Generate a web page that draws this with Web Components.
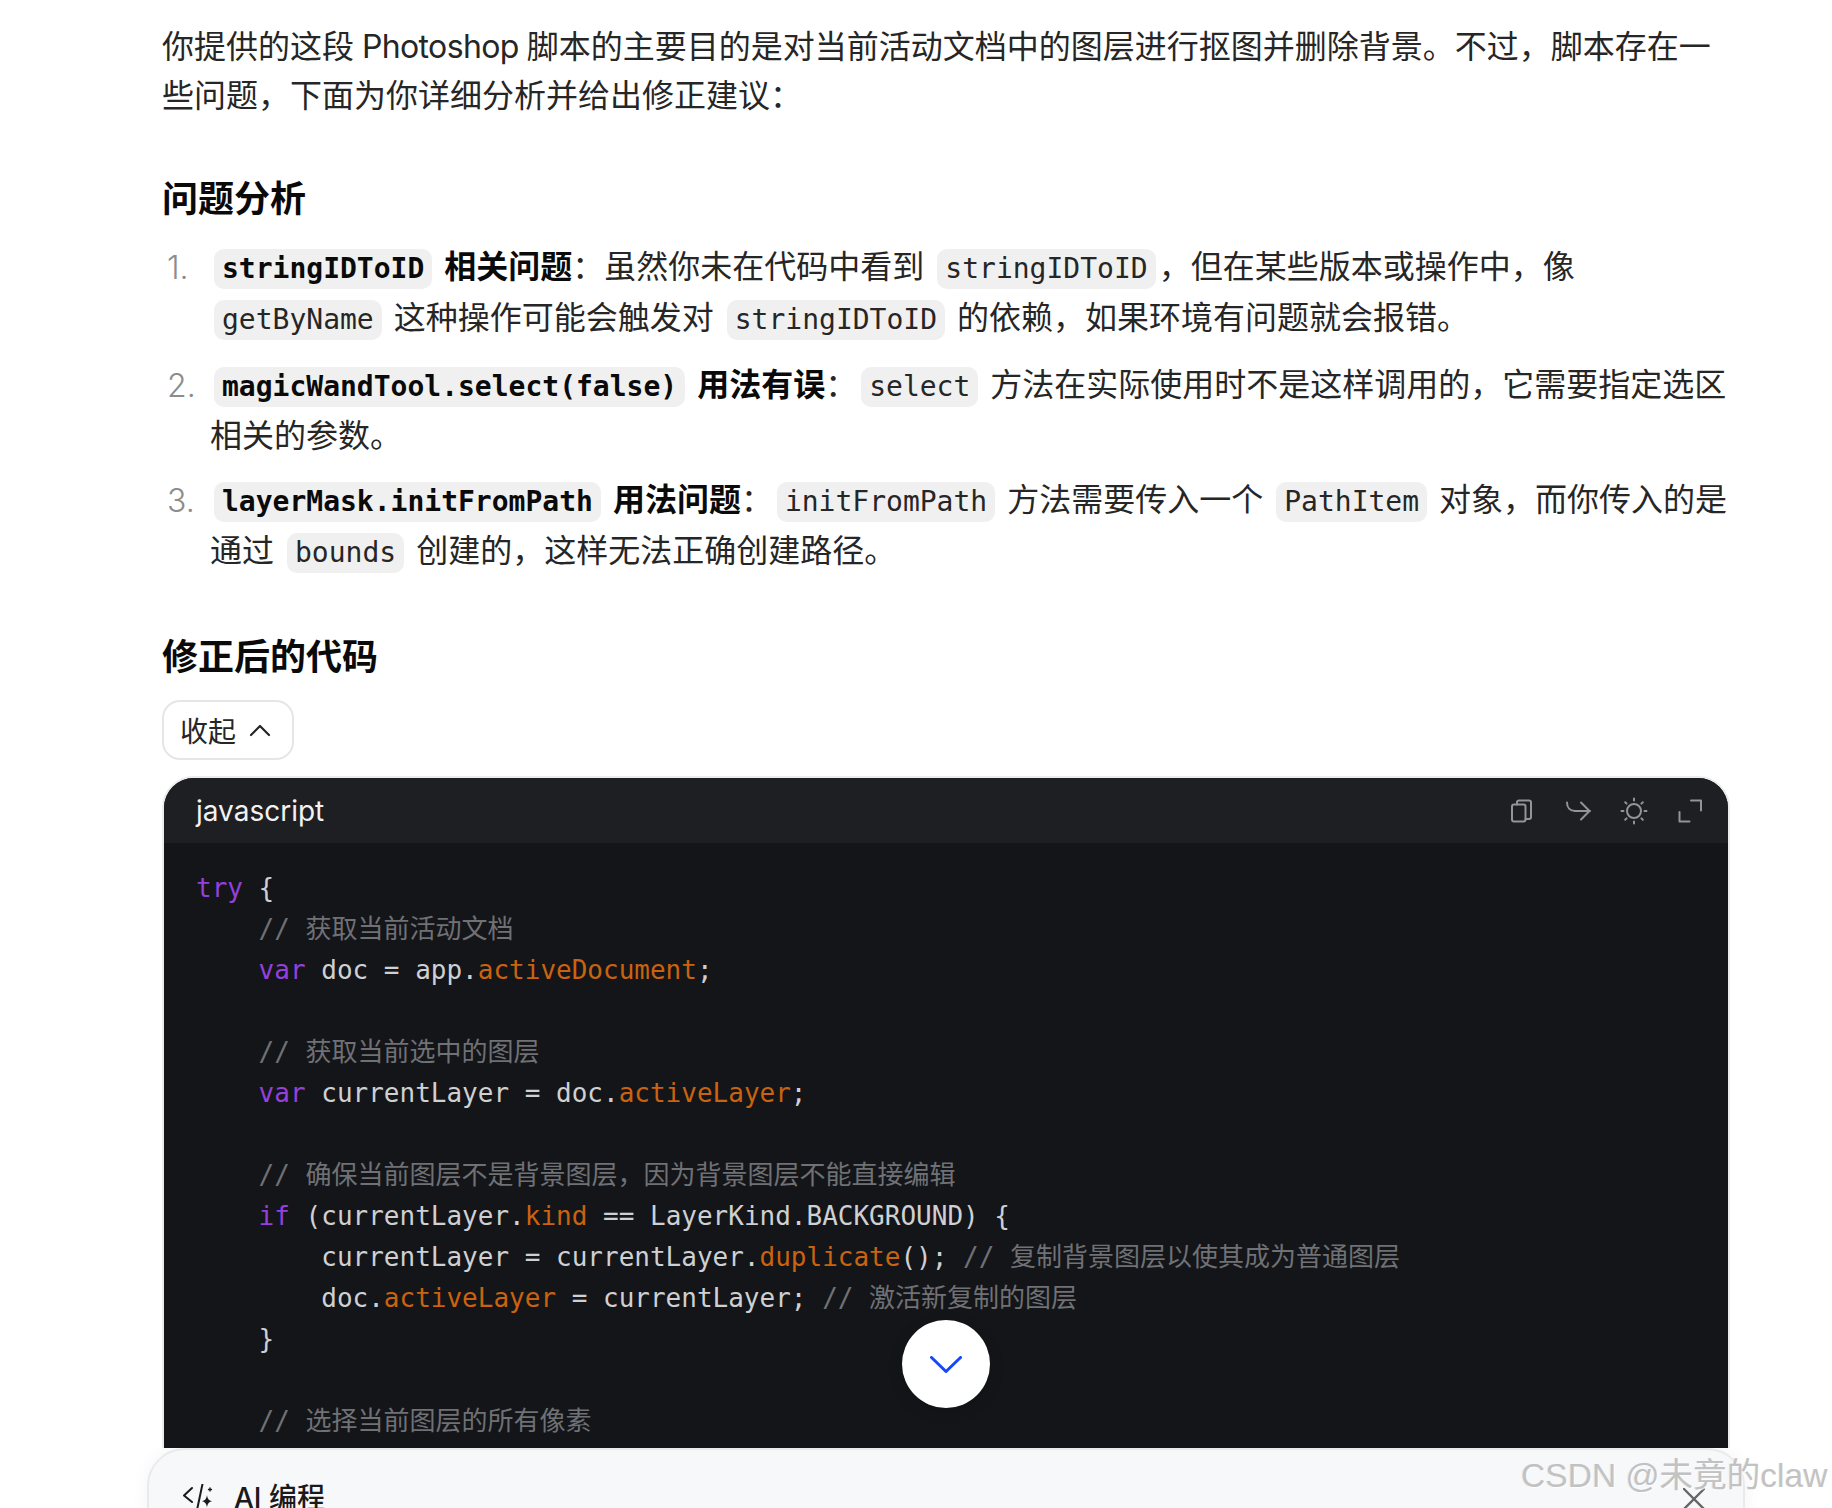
<!DOCTYPE html>
<html lang="zh">
<head>
<meta charset="utf-8">
<title>AI 编程</title>
<style>
  html, body { margin: 0; background: #fff; }
</style>
</head>
<body>
<answer-page>
  <md-para>你提供的这段 <span>Photoshop</span> 脚本的主要目的是对当前活动文档中的图层进行抠图并删除背景。不过，脚本存在一些问题，下面为你详细分析并给出修正建议：</md-para>
  <md-heading style="--top:55px">问题分析</md-heading>
  <md-list>
    <md-item n="1."><inline-code strong>stringIDToID</inline-code> <b>相关问题</b>：虽然你未在代码中看到 <inline-code>stringIDToID</inline-code>，但在某些版本或操作中，像 <inline-code>getByName</inline-code> 这种操作可能会触发对 <inline-code>stringIDToID</inline-code> 的依赖，如果环境有问题就会报错。</md-item>
    <md-item n="2." style="--mt:2px"><inline-code strong>magicWandTool.select(false)</inline-code> <b>用法有误</b>：<inline-code>select</inline-code> 方法在实际使用时不是这样调用的，它需要指定选区相关的参数。</md-item>
    <md-item n="3." style="--mt:1px"><inline-code strong>layerMask.initFromPath</inline-code> <b>用法问题</b>：<inline-code>initFromPath</inline-code> 方法需要传入一个 <inline-code>PathItem</inline-code> 对象，而你传入的是通过 <inline-code>bounds</inline-code> 创建的，这样无法正确创建路径。</md-item>
  </md-list>
  <md-heading style="--top:56px">修正后的代码</md-heading>
  <collapse-button>收起</collapse-button>
  <code-block lang="javascript"></code-block>
  <scroll-down slot="over"></scroll-down>
  <ai-panel slot="bottom">AI 编程</ai-panel>
  <water-mark slot="over">CSDN @未竟的claw</water-mark>
</answer-page>

<script>
const CJK = '"Noto Sans CJK SC", sans-serif';
const SANS = `Inter, ${CJK}`;
const MONO = `"DejaVu Sans Mono", ${CJK}`;

class AnswerPage extends HTMLElement {
  constructor() {
    super();
    this.attachShadow({ mode: 'open' }).innerHTML = `
      <style>
        :host { display: flex; flex-direction: column; position: relative; height: 1508px; overflow: hidden;
          font-family: ${SANS}; color: #262626; background: #fff; }
        .scroll { height: 1448px; overflow: hidden; padding: 22px 103px 0 162px; box-sizing: border-box; flex: none; }
      </style>
      <div class="scroll"><slot></slot></div>
      <slot name="bottom"></slot>
      <slot name="over"></slot>
    `;
  }
}

class MdPara extends HTMLElement {
  constructor() {
    super();
    this.attachShadow({ mode: 'open' }).innerHTML = `
      <style>
        :host { display: block; font-size: 32px; line-height: 49px; word-spacing: -1px; }
        ::slotted(span) { letter-spacing: -.65px; }
      </style>
      <slot></slot>
    `;
  }
}

class MdHeading extends HTMLElement {
  constructor() {
    super();
    this.attachShadow({ mode: 'open' }).innerHTML = `
      <style>:host { display: block; margin-top: var(--top, 55px); font-size: 36px; line-height: 48px; font-weight: 700; color: #0a0a0a; }</style>
      <slot></slot>
    `;
  }
}

class MdList extends HTMLElement {
  constructor() {
    super();
    this.attachShadow({ mode: 'open' }).innerHTML = `
      <style>:host { display: flex; flex-direction: column; gap: 14px; margin-top: 19px; }</style>
      <slot></slot>
    `;
  }
}

class MdItem extends HTMLElement {
  constructor() {
    super();
    this.attachShadow({ mode: 'open' }).innerHTML = `
      <style>
        :host { display: grid; grid-template-columns: 48px 1fr; margin-top: var(--mt, 0); font-size: 32px; line-height: 49px; }
        .n { color: #8c8c8c; padding-left: 5px; line-height: 52px; font-size: 32px; font-weight: 300; }
        ::slotted(b) { font-weight: 700; color: #0a0a0a; }
      </style>
      <div class="n">${this.getAttribute('n')}</div>
      <div><slot></slot></div>
    `;
  }
}

class InlineCode extends HTMLElement {
  constructor() {
    super();
    this.attachShadow({ mode: 'open' }).innerHTML = `
      <style>
        :host { display: inline-block; font-family: ${MONO}; font-size: 28px; line-height: 40px; padding: 0 8px;
          margin: 4px 3px 4px 4px; background: #f0f0f0; border-radius: 10px; color: #262626; }
        :host([strong]) { font-weight: 700; color: #0a0a0a; }
      </style>
      <slot></slot>
    `;
  }
}

class CollapseButton extends HTMLElement {
  constructor() {
    super();
    this.attachShadow({ mode: 'open' }).innerHTML = `
      <style>
        :host { display: flex; width: 132px; height: 60px; box-sizing: border-box; margin-top: 19px; align-items: center;
          gap: 12px; padding-left: 16px; border: 2px solid #e6e6e6; border-radius: 18px; font-size: 28px; color: #262626; }
        svg { width: 24px; height: 24px; }
      </style>
      <slot></slot>
      <svg viewBox="0 0 24 24" fill="none" stroke="#262626" stroke-width="2.2" stroke-linecap="round" stroke-linejoin="round"><path d="M3 17 12 8l9 9"/></svg>
    `;
  }
}

// t = plain, k = keyword, p = property, c = comment
const CODE = [
  [['k', 'try'], ['t', ' {']],
  [['c', '    // 获取当前活动文档']],
  [['k', '    var'], ['t', ' doc = app.'], ['p', 'activeDocument'], ['t', ';']],
  [],
  [['c', '    // 获取当前选中的图层']],
  [['k', '    var'], ['t', ' currentLayer = doc.'], ['p', 'activeLayer'], ['t', ';']],
  [],
  [['c', '    // 确保当前图层不是背景图层，因为背景图层不能直接编辑']],
  [['k', '    if'], ['t', ' (currentLayer.'], ['p', 'kind'], ['t', ' == LayerKind.BACKGROUND) {']],
  [['t', '        currentLayer = currentLayer.'], ['p', 'duplicate'], ['t', '(); '], ['c', '// 复制背景图层以使其成为普通图层']],
  [['t', '        doc.'], ['p', 'activeLayer'], ['t', ' = currentLayer; '], ['c', '// 激活新复制的图层']],
  [['t', '    }']],
  [],
  [['c', '    // 选择当前图层的所有像素']],
];

class CodeBlock extends HTMLElement {
  constructor() {
    super();
    const lines = CODE.map(line => `<div class="l">${line.map(([c, s]) => `<span class="${c}">${s}</span>`).join('')}</div>`).join('');
    this.attachShadow({ mode: 'open' }).innerHTML = `
      <style>
        :host { display: block; margin-top: 16px; margin-left: 0; margin-right: -1px; border: 2px solid #ececec; border-radius: 32px; overflow: hidden; background: #141519; }
        header { display: flex; align-items: center; justify-content: space-between; height: 65px; padding: 0 24px 0 32px; background: #1e1f23;
          color: #f2f2f2; font-size: 28px; }
        .icons { display: flex; gap: 28px; }
        svg { width: 28px; height: 28px; display: block; fill: none; stroke: #939497; stroke-width: 2; stroke-linecap: round; stroke-linejoin: round; }
        pre { margin: 0; padding: 25px 32px 120px; font-family: ${MONO}; font-size: 26px; line-height: 41px; color: #cfd0d2; }
        .l { height: 41px; }
        .k { color: #9440dc; }
        .p { color: #c9630f; }
        .c { color: #6f7175; }
      </style>
      <header>
        <span>${this.getAttribute('lang')}</span>
        <div class="icons">
          <svg viewBox="0 0 28 28"><rect x="4" y="7.5" width="13.5" height="17" rx="2"/><path d="M9 7.5V5.500a2 2 0 0 1 2-2h10a2 2 0 0 1 2 2V20a2 2 0 0 1-2 2h-3.500"/></svg>
          <svg viewBox="0 0 28 28"><path d="M3 5.500c0 5 3 8.500 8 8.500h15"/><path d="M17 5.500l8.500 8.500-8.500 8.500"/></svg>
          <svg viewBox="0 0 28 28"><circle cx="14" cy="14" r="7"/><path d="M14 1.500v2M14 24.500v2M1.500 14h2M24.500 14h2M5.200 5.200l1.400 1.400M21.400 21.400l1.400 1.400M5.200 22.800l1.400-1.400M21.400 6.600l1.400-1.400"/></svg>
          <svg viewBox="0 0 28 28"><path d="M15 3.500h10v10M3.500 15v9.500h10"/></svg>
        </div>
      </header>
      <pre>${lines}</pre>
    `;
  }
}

class ScrollDown extends HTMLElement {
  constructor() {
    super();
    this.attachShadow({ mode: 'open' }).innerHTML = `
      <style>
        :host { position: absolute; left: 902px; top: 1320px; width: 88px; height: 88px; border-radius: 50%; background: #fff;
          display: flex; align-items: center; justify-content: center; box-shadow: 0 4px 16px rgba(0,0,0,.12); }
        svg { width: 32px; height: 17px; display: block; }
      </style>
      <svg viewBox="0 0 32 17" fill="none" stroke="#1447ff" stroke-width="3" stroke-linecap="round" stroke-linejoin="round"><path d="M1.500 1.500 16 15.500 30.500 1.500"/></svg>
    `;
  }
}

class AiPanel extends HTMLElement {
  constructor() {
    super();
    this.attachShadow({ mode: 'open' }).innerHTML = `
      <style>
        :host { display: block; height: 60px; overflow: hidden; padding: 0 87px 0 147px; flex: none; }
        .box { height: 140px; box-sizing: border-box; border: 2px solid #e9eaec; border-radius: 38px 38px 0 0; background: #f7f8fa;
          box-shadow: 0 0 18px rgba(0,0,0,.05); display: flex; align-items: flex-start; padding: 28px 24px 0 34px; position: relative; }
        .t { font-size: 28px; line-height: 40px; font-weight: 500; color: #1a1a1a; margin-left: 21px; }
        .ic { width: 30px; height: 34px; margin-top: 6px; flex: none; }
        .x { position: absolute; right: 38px; top: 38px; width: 22px; height: 22px; }
      </style>
      <div class="box">
        <svg class="ic" viewBox="0 0 30 34" fill="none" stroke="#1a1a1a" stroke-width="2" stroke-linecap="round" stroke-linejoin="round">
          <path d="M9 4 1 11.500 9 18"/><path d="M19.500 0 14 26"/>
          <path d="M24 11c.6 4 1.800 5.400 5 6.200-3.200.8-4.400 2.200-5 6.200-.6-4-1.800-5.400-5-6.200 3.200-.8 4.400-2.200 5-6.200z" fill="#1a1a1a" stroke="none"/>
          <path d="M27 4v3M25.500 5.500h3" stroke-width="1.400"/>
        </svg>
        <span class="t"><slot></slot></span>
        <svg class="x" viewBox="0 0 22 22" fill="none" stroke="#666" stroke-width="2.400" stroke-linecap="round"><path d="M1 1 21 21M21 1 1 21"/></svg>
      </div>
    `;
  }
}

class WaterMark extends HTMLElement {
  constructor() {
    super();
    this.attachShadow({ mode: 'open' }).innerHTML = `
      <style>
        :host { position: absolute; left: 1521px; top: 1454px; font-family: "Liberation Sans", ${CJK}; font-size: 33.6px; line-height: 44px;
          white-space: nowrap; color: rgba(180,180,180,.8); text-shadow: 1px 1px 1px rgba(255,255,255,.8), -1px 0 0 rgba(150,150,150,.15); }
      </style>
      <slot></slot>
    `;
  }
}

customElements.define('answer-page', AnswerPage);
customElements.define('md-para', MdPara);
customElements.define('md-heading', MdHeading);
customElements.define('md-list', MdList);
customElements.define('md-item', MdItem);
customElements.define('inline-code', InlineCode);
customElements.define('collapse-button', CollapseButton);
customElements.define('code-block', CodeBlock);
customElements.define('scroll-down', ScrollDown);
customElements.define('ai-panel', AiPanel);
customElements.define('water-mark', WaterMark);
</script>
</body>
</html>
